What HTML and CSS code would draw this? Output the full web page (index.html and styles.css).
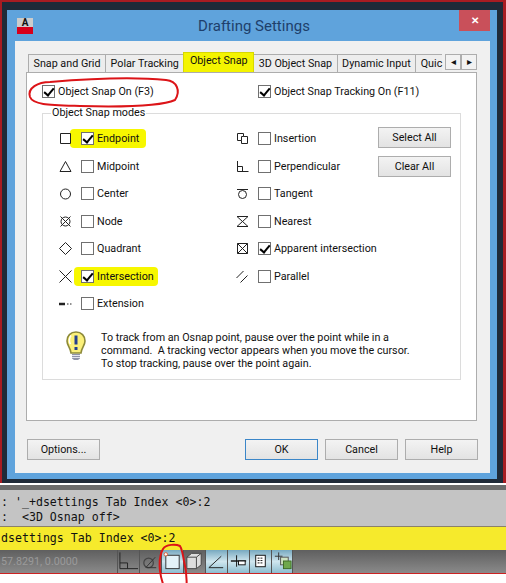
FILE: index.html
```html
<!DOCTYPE html>
<html lang="en">
<head>
  <meta charset="UTF-8">
  <meta name="viewport" content="width=device-width, initial-scale=1.0">
  <title>Drafting Settings</title>
  <link rel="stylesheet" href="styles.css">
</head>
<body>
  <div class="frame">
    <div class="window">
      <div class="titlebar">
        <div class="app-icon">A</div>
        <div class="title">Drafting Settings</div>
        <div class="close">&#10005;</div>
      </div>
      <div class="client">
        <div class="tabs">
          <div class="tab">Snap and Grid</div>
          <div class="tab">Polar Tracking</div>
          <div class="tab active">Object Snap</div>
          <div class="tab">3D Object Snap</div>
          <div class="tab">Dynamic Input</div>
          <div class="tab cut">Quic</div>
          <div class="tab-arrows"><span>&#9666;</span><span>&#9656;</span></div>
        </div>
        <div class="panel">
          <div class="top-checks">
            <label class="check"><span class="box on"></span>Object Snap On (F3)</label>
            <label class="check"><span class="box on"></span>Object Snap Tracking On (F11)</label>
          </div>
          <fieldset class="group">
            <legend>Object Snap modes</legend>
            <div class="modes">
              <div class="mode marked"><svg class="mark" viewBox="0 0 13 13"><path d="M1.5 1.500h10v10h-10z"/></svg><span class="box on"></span>Endpoint</div>
              <div class="mode"><svg class="mark" viewBox="0 0 13 13"><path d="M6.500 1.500l5.500 10h-11z"/></svg><span class="box"></span>Midpoint</div>
              <div class="mode"><svg class="mark" viewBox="0 0 13 13"><circle cx="6.500" cy="7" r="5"/></svg><span class="box"></span>Center</div>
              <div class="mode"><svg class="mark" viewBox="0 0 13 13"><circle cx="6.500" cy="6.500" r="4.500"/><path d="M1.500 1.500l10 10M11.500 1.500l-10 10"/></svg><span class="box"></span>Node</div>
              <div class="mode"><svg class="mark" viewBox="0 0 13 13"><path d="M6.500 .5l6 6-6 6-6-6z"/></svg><span class="box"></span>Quadrant</div>
              <div class="mode marked wide"><svg class="mark" viewBox="0 0 13 13"><path d="M.5 .5l12 12M12.500 .5l-12 12"/></svg><span class="box on"></span>Intersection</div>
              <div class="mode"><svg class="mark" viewBox="0 0 13 13"><path class="thick" d="M0 7h6"/><path d="M8 7h1.500M11 7h1.500"/></svg><span class="box"></span>Extension</div>
            </div>
            <div class="modes">
              <div class="mode"><svg class="mark" viewBox="0 0 13 13"><path d="M1.500 1.500h6v3h4v7h-6v-3h-4zM5.500 8.500v-4h2"/></svg><span class="box"></span>Insertion</div>
              <div class="mode"><svg class="mark" viewBox="0 0 13 13"><path d="M1.500 1v10.500h11M1.500 6.500h5v5"/></svg><span class="box"></span>Perpendicular</div>
              <div class="mode"><svg class="mark" viewBox="0 0 13 13"><path d="M1 2.500h11"/><circle cx="6.500" cy="7.500" r="4"/></svg><span class="box"></span>Tangent</div>
              <div class="mode"><svg class="mark" viewBox="0 0 13 13"><path d="M1 1.500h11l-11 10h11z"/></svg><span class="box"></span>Nearest</div>
              <div class="mode"><svg class="mark" viewBox="0 0 13 13"><path d="M1.500 1.500h10v10h-10zM1.500 1.500l10 10M11.500 1.500l-10 10"/></svg><span class="box on"></span>Apparent intersection</div>
              <div class="mode"><svg class="mark" viewBox="0 0 13 13"><path d="M.5 8l7-7M4.500 12.500l7-7"/></svg><span class="box"></span>Parallel</div>
            </div>
            <div class="side-buttons">
              <button class="btn">Select All</button>
              <button class="btn">Clear All</button>
            </div>
            <div class="tip">
              <svg class="bulb" viewBox="0 0 20 30">
                <path d="M10 1C4.500 1 1 5 1 10c0 4.500 3.500 6.500 4 12h10c.5-5.500 4-7.500 4-12 0-5-3.500-9-9-9z" fill="#fbf07a" stroke="#8d8a3a" stroke-width="1.600"/>
                <path d="M5 4.500C3 7 3 11 4.500 13" fill="none" stroke="#fff" stroke-width="1.500"/>
                <path d="M10 4.500v9" stroke="#24408e" stroke-width="3"/>
                <path d="M10 16v3" stroke="#24408e" stroke-width="3"/>
                <path d="M6 23h8v4.500l-2 1.500h-4l-2-1.500z" fill="#8f93a8"/>
                <path d="M6 24.500h8M6 26.500h8" stroke="#e4e4ee"/>
              </svg>
              <p>To track from an Osnap point, pause over the point while in a<br>command.&nbsp; A tracking vector appears when you move the cursor.<br>To stop tracking, pause over the point again.</p>
            </div>
          </fieldset>
        </div>
        <div class="actions">
          <button class="btn">Options...</button>
          <div class="actions-right">
            <button class="btn default">OK</button>
            <button class="btn">Cancel</button>
            <button class="btn">Help</button>
          </div>
        </div>
      </div>
    </div>
  </div>
  <div class="autocad">
    <div class="history">
      <div>: '_+dsettings Tab Index &lt;0&gt;:2</div>
      <div>:  &lt;3D Osnap off&gt;</div>
    </div>
    <div class="cmdline">dsettings Tab Index &lt;0&gt;:2</div>
    <div class="statusbar">
      <div class="coords">57.8291, 0.0000</div>
      <div class="toggles">
        <div class="toggle"><svg viewBox="0 0 22 22"><path d="M2 2v17h19M2 13h8v6" fill="none" stroke="#222"/></svg></div>
        <div class="toggle"><svg viewBox="0 0 22 22"><circle cx="9" cy="13" r="5" fill="none" stroke="#444" stroke-width="1.300"/><path d="M6 18l10-11M7 18h10" stroke="#333" fill="none"/></svg></div>
        <div class="toggle lit"><svg viewBox="0 0 22 22"><rect x="4" y="5" width="14" height="14" fill="#e4f3f8" stroke="#333"/><circle cx="4" cy="4" r="1.800" fill="#fff" stroke="#d9603a"/></svg></div>
        <div class="toggle"><svg viewBox="0 0 22 22"><path d="M3 7l5-4h10v12l-5 4H3z" fill="#ddd" stroke="#444"/><path d="M3 7h10v12M13 7l5-4" fill="none" stroke="#444"/></svg></div>
        <div class="toggle lit"><svg viewBox="0 0 22 22"><path d="M3 18L16 6M3 18h15" fill="none" stroke="#222"/></svg></div>
        <div class="toggle lit"><svg viewBox="0 0 22 22"><path d="M9 5v12" stroke="#111"/><path d="M3 11h16" stroke="#111" stroke-width="1.500"/><rect x="11" y="11" width="7" height="4" fill="#fff" stroke="#111"/></svg></div>
        <div class="toggle lit"><svg viewBox="0 0 22 22"><rect x="6" y="5" width="10" height="12" fill="#fff" stroke="#111"/><path d="M8 8h6M8 10.500h6M8 13h6" stroke="#111" stroke-dasharray="2 1"/></svg></div>
        <div class="toggle lit last"><svg viewBox="0 0 22 22"><path d="M7 2v8M3 6h8" stroke="#333"/><rect x="9" y="7" width="8" height="8" fill="#cfe3c2" stroke="#555"/><rect x="12" y="11" width="8" height="8" fill="#6fa84c" stroke="#3d6b25"/></svg></div>
      </div>
    </div>
    <svg class="ink" viewBox="0 0 506 583">
      <path d="M50 82C38 82 27 88 30 97c3 8 20 8 50 9 40 1 80 1 95-6 6-9 2-19-9-20-30-3-80-1-116 2" />
      <path d="M163 549c-3 5-4 12-3 22 1 8 5 19 9 26 3 3 13 4 15 0 4-6 3-25 0-36-1-6-2-12-4-15-4-2-14-2-17 3z"/>
    </svg>
  </div>
</body>
</html>
```

FILE: styles.css
```css
* {
  box-sizing: border-box;
}
body {
  margin: 0;
  width: 506px;
  height: 583px;
  overflow: hidden;
  position: relative;
  background: #fff;
  font-family: Roboto, 'Liberation Sans', Arial, sans-serif;
  font-size: 10.750px;
  color: #111;
}
.frame {
  height: 483px;
  padding: 8px 6px 4px 5px;
  background: #1f2a38;
  border-top: 2px solid #a81c22;
  border-left: 2px solid #a81c22;
  border-right: 3px solid #a81c22;
}
.window {
  height: 100%;
  padding: 0 7px 6px 8px;
  background: #5fa3dc;
  display: flex;
  flex-direction: column;
}
.titlebar {
  height: 31px;
  flex: none;
  display: flex;
  align-items: center;
  justify-content: center;
  position: relative;
}
.title {
  font-size: 15px;
  color: #1e3f6b;
  margin-left: 3px;
}
.app-icon {
  position: absolute;
  left: 2px;
  top: 8px;
  width: 16px;
  height: 16px;
  background: linear-gradient(#ccc 9px, #d8001a 9px);
  font-size: 10px;
  font-weight: bold;
  line-height: 10px;
  text-align: center;
}
.close {
  position: absolute;
  right: 0;
  top: 0;
  width: 31px;
  height: 21px;
  background: #c9505a;
  color: #fff;
  font-size: 10px;
  font-weight: bold;
  line-height: 21px;
  text-align: center;
}
.client {
  flex: 1;
  background: #f0f0f0;
  padding: 13px 13px 12px 11px;
  display: flex;
  flex-direction: column;
}
.tabs {
  height: 18px;
  display: flex;
  align-items: flex-end;
  margin-left: 2px;
  flex: none;
}
.tab {
  height: 18px;
  padding: 0 4.500px;
  background: #ededed;
  border: 1px solid #adadad;
  border-bottom: none;
  margin-right: -1px;
  line-height: 17px;
  white-space: nowrap;
}
.tab.active {
  height: 20px;
  background: #f4f400;
  padding: 0 5.500px;
  line-height: 16px;
  position: relative;
  z-index: 1;
  border-color: #d8d800;
}
.tab.cut {
  padding-right: 0;
  border-right: none;
}
.tab-arrows {
  display: flex;
  height: 16px;
  margin-left: auto;
  align-self: flex-start;
}
.tab-arrows span {
  width: 16px;
  height: 16px;
  background: #f2f2f2;
  border: 1px solid #adadad;
  font-size: 10px;
  line-height: 14px;
  text-align: center;
}
.panel {
  height: 349px;
  flex: none;
  background: #fff;
  border: 1px solid #adadad;
  padding: 8px 15px 0;
}
.top-checks {
  display: flex;
  height: 20px;
}
.check {
  display: flex;
  flex: none;
  align-items: center;
  width: 216px;
}
.box {
  width: 13px;
  height: 13px;
  flex: none;
  margin-right: 3px;
  background: #fff;
  border: 1px solid #707070;
  position: relative;
}
.box.on::after {
  content: "";
  position: absolute;
  left: 3px;
  top: 0;
  width: 4px;
  height: 8px;
  border: solid #000;
  border-width: 0 2px 2px 0;
  transform: rotate(40deg);
}
.group {
  margin: 5px 0 0;
  padding: 0;
  height: 274px;
  border: 1px solid #dcdcdc;
  position: relative;
}
.group legend {
  margin-left: 8px;
  padding: 0 1px;
  line-height: 14px;
}
.modes {
  position: absolute;
  top: 5px;
  left: 16px;
  display: grid;
  grid-auto-rows: 27.500px;
}
.modes + .modes {
  left: 193px;
}
.mode {
  display: flex;
  align-items: center;
  position: relative;
  z-index: 0;
}
.mode.marked::before {
  content: "";
  position: absolute;
  z-index: -1;
  left: 11px;
  top: 4px;
  width: 76px;
  height: 19px;
  border-radius: 4px;
  background: #f7f700;
}
.mode.marked.wide::before {
  left: 15px;
  width: 84px;
}
.mark {
  width: 13px;
  height: 13px;
  margin-right: 9px;
  fill: none;
  stroke: #222;
}
.mark .thick {
  stroke-width: 2.500;
}
.side-buttons {
  position: absolute;
  right: 9px;
  top: 7px;
  display: flex;
  flex-direction: column;
  gap: 8px;
}
.btn {
  width: 73px;
  height: 21px;
  padding: 0;
  font: inherit;
  color: #111;
  background: linear-gradient(#f3f3f3, #e3e3e3);
  border: 1px solid #adadad;
}
.btn.default {
  border-color: #3b86c8;
}
.tip {
  position: absolute;
  left: 23px;
  top: 211px;
  display: flex;
  gap: 15px;
}
.bulb {
  width: 20px;
  height: 30px;
  flex: none;
}
.tip p {
  margin: 0;
  line-height: 13px;
}
.actions {
  margin-top: 18px;
  margin-left: 1px;
  display: flex;
  justify-content: space-between;
  margin-right: -1px;
}
.actions-right {
  display: flex;
  gap: 7px;
}
.autocad {
  position: relative;
}
.history {
  margin-top: 2px;
  height: 42px;
  padding-top: 4px;
  background: linear-gradient(#6b6b6b 5px, #c4c4c4 5px);
  border-bottom: 1px solid #8c8168;
  font-family: 'DejaVu Sans Mono', monospace;
  font-size: 11.600px;
  line-height: 15px;
}
.history div {
  padding-left: 1px;
  white-space: pre;
  position: relative;
  top: 6px;
}
.cmdline {
  height: 23px;
  background: #f6ea2c;
  font-family: 'DejaVu Sans Mono', monospace;
  font-size: 11.600px;
  line-height: 23px;
  padding-left: 1px;
}
.statusbar {
  height: 24px;
  display: flex;
  background: linear-gradient(#5f5f5f, #8a8a8a);
  border-bottom: 1px solid #c22;
}
.coords {
  width: 117px;
  padding-left: 1px;
  color: #9a9a9a;
  line-height: 23px;
}
.toggles {
  display: flex;
}
.toggle {
  width: 22px;
  height: 23px;
  border-left: 1px solid #555;
}
.toggle.last {
  border-right: 1px solid #555;
}
.toggle svg {
  display: block;
  width: 21px;
  height: 22px;
}
.toggle.lit {
  background: linear-gradient(#78a9c0, #cfe6ee 50%, #8cbdd0);
}
.ink {
  position: absolute;
  left: 0;
  top: -485px;
  width: 506px;
  height: 583px;
  fill: none;
  stroke: #dc1418;
  stroke-width: 2;
  pointer-events: none;
}
```
